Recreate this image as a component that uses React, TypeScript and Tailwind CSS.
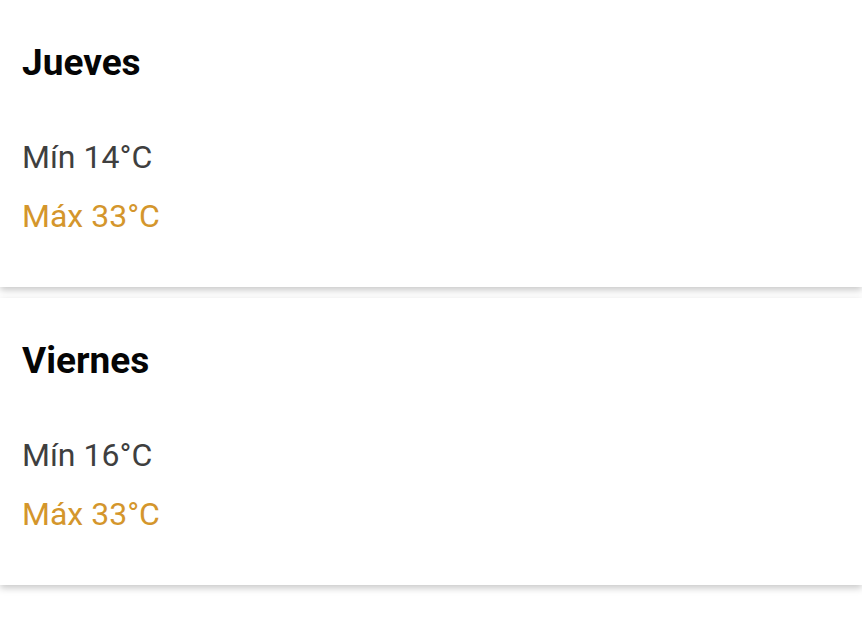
const days = [
  { name: "Jueves", min: 14, max: 33 },
  { name: "Viernes", min: 16, max: 33 },
];

export default function App() {
  return (
    <div className="min-h-screen bg-white font-['Roboto',sans-serif] flex flex-col gap-[11px]">
      {days.map((d) => (
        <div
          key={d.name}
          className="bg-white px-[22px] pt-[41px] pb-[51px] shadow-[0_3px_7px_rgba(0,0,0,0.22)] flex flex-col"
        >
          <h2 className="text-[37px] leading-[44px] font-bold text-[#050505]">{d.name}</h2>
          <p className="mt-[52px] text-[32px] leading-[40px] text-[#3f3f3f]">Mín {d.min}°C</p>
          <p className="mt-[19px] text-[32px] leading-[40px] text-[#d4962c]">Máx {d.max}°C</p>
        </div>
      ))}
    </div>
  );
}
